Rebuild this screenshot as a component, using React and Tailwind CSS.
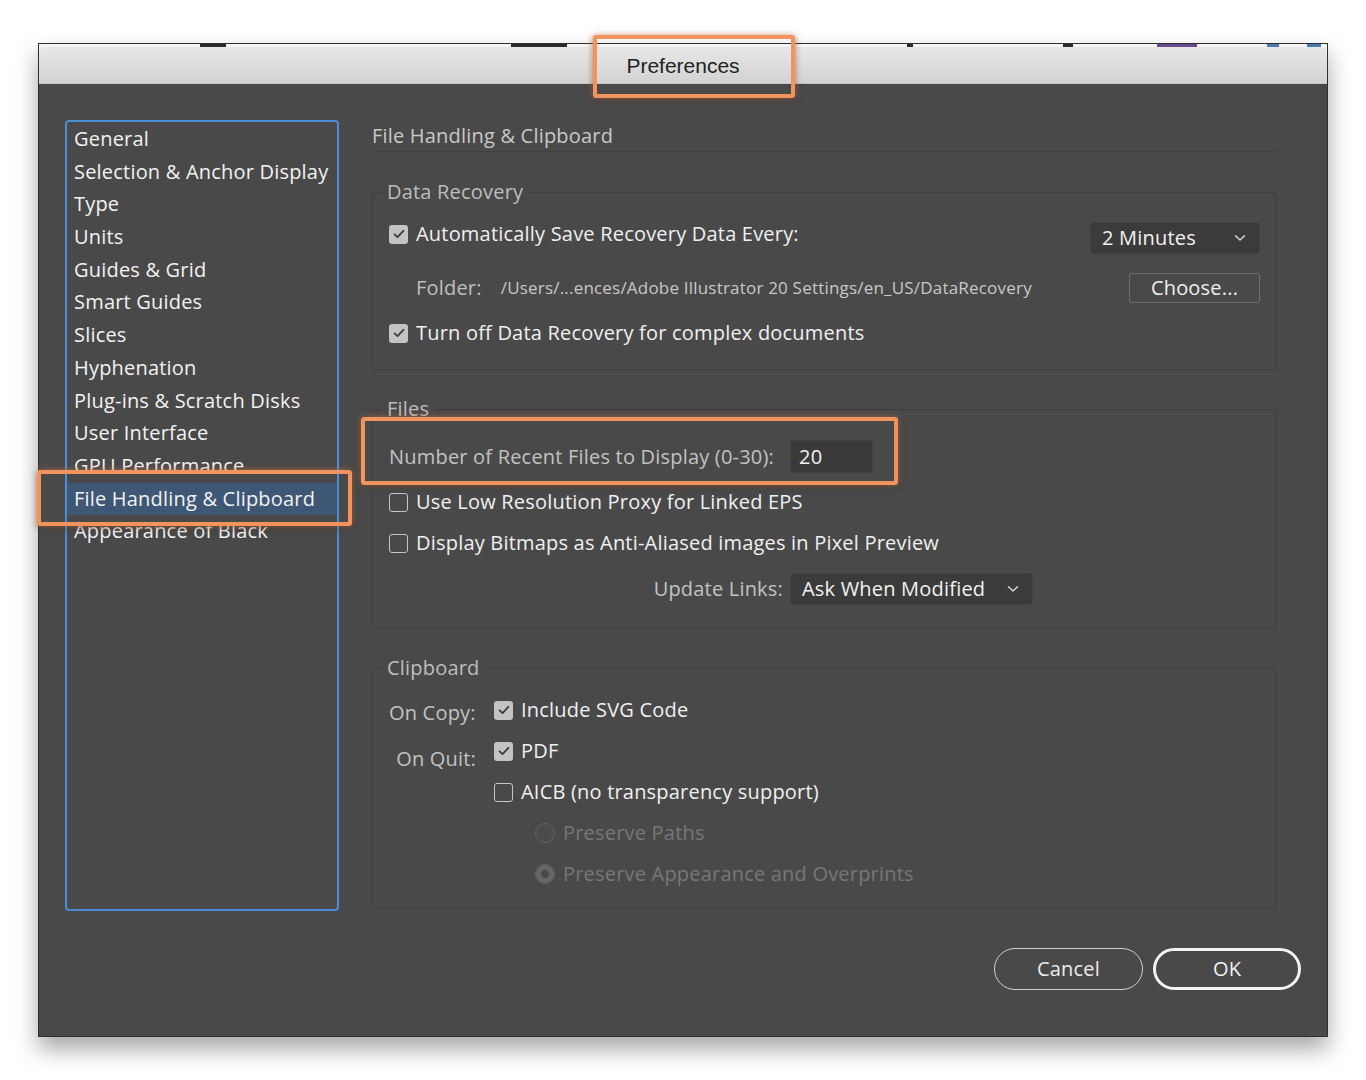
import React from "react";

const items = [
  "General",
  "Selection & Anchor Display",
  "Type",
  "Units",
  "Guides & Grid",
  "Smart Guides",
  "Slices",
  "Hyphenation",
  "Plug-ins & Scratch Disks",
  "User Interface",
  "GPU Performance",
  "File Handling & Clipboard",
  "Appearance of Black",
];

function Check({ checked }) {
  if (checked) {
    return (
      <span className="flex h-[19px] w-[19px] shrink-0 items-center justify-center rounded-[3px] bg-[#c3c3c3]">
        <svg width="12" height="10" viewBox="0 0 12 10">
          <path d="M1.6 5.3 4.5 8.1 10.4 1.8" fill="none" stroke="#3b3b3b" strokeWidth="1.8" strokeLinecap="round" strokeLinejoin="round" />
        </svg>
      </span>
    );
  }
  return <span className="h-[19px] w-[19px] shrink-0 rounded-[3px] border-[1.5px] border-[#c6c6c6]" />;
}

function CheckRow({ checked, children }) {
  return (
    <div className="flex h-[24px] items-center gap-[8px] text-[20px] leading-[24px] text-[#f0f0f0]">
      <Check checked={checked} />
      <span className="whitespace-nowrap">{children}</span>
    </div>
  );
}

function Radio({ on, children }) {
  return (
    <div className="flex h-[24px] items-center gap-[8px] pl-[41px] text-[20px] leading-[24px] text-[#777777]">
      <span className="flex h-[20px] w-[20px] shrink-0 items-center justify-center rounded-full border-[1.5px] border-[#636363] bg-[#4b4b4b]">
        {on && <span className="h-[18px] w-[18px] rounded-full bg-[#666666] p-[5px]"><span className="block h-[8px] w-[8px] rounded-full bg-[#4a4a4a]" /></span>}
      </span>
      <span className="whitespace-nowrap">{children}</span>
    </div>
  );
}

function Chevron() {
  return (
    <svg width="12" height="8" viewBox="0 0 12 8">
      <path d="M1.5 1.8 6 6 10.5 1.8" fill="none" stroke="#d8d8d8" strokeWidth="1.4" strokeLinecap="round" strokeLinejoin="round" />
    </svg>
  );
}

function Select({ width, children }) {
  return (
    <div
      className={`flex h-[32px] items-center justify-between rounded-[4px] border border-[#414141] bg-[#3b3b3b] pl-[11px] pr-[13px] text-[20px] text-[#f2f2f2] ${width}`}
    >
      <span className="whitespace-nowrap">{children}</span>
      <Chevron />
    </div>
  );
}

function Group({ title, className, children }) {
  return (
    <fieldset className={`rounded-[4px] border border-[#3e3e3e] px-[16px] pt-0 ${className}`}>
      <legend className="ml-[-8px] px-[6px] text-[20px] leading-[24px] text-[#bdbdbd]">{title}</legend>
      {children}
    </fieldset>
  );
}

function Highlight({ className }) {
  return (
    <div
      className={`pointer-events-none absolute rounded-[3px] border-[4px] border-[#f0935c] shadow-[0_0_6px_rgba(240,140,80,0.55),0_2px_6px_rgba(0,0,0,0.35)] ${className}`}
    />
  );
}

export default function App() {
  return (
    <div className="relative h-[1080px] w-[1366px] overflow-hidden bg-white pl-[38px] pt-[43px] font-['Open_Sans',sans-serif] font-medium tracking-[0.2px]">
      <div className="flex w-[1290px] flex-col border border-[#2f2f2f] bg-[#f4f4f4] shadow-[0_12px_22px_rgba(0,0,0,0.35)]">
        <div className="flex h-[3px]">
          <span className="ml-[161px] w-[26px] bg-[#2a2a2a]" />
          <span className="ml-[285px] w-[56px] bg-[#2a2a2a]" />
          <span className="ml-[340px] w-[6px] bg-[#2a2a2a]" />
          <span className="ml-[150px] w-[10px] bg-[#2a2a2a]" />
          <span className="ml-[84px] w-[40px] bg-[#6b4a8f]" />
          <span className="ml-[70px] w-[12px] bg-[#4a7ab0]" />
          <span className="ml-[28px] w-[14px] bg-[#4a7ab0]" />
        </div>
        <div className="flex h-[37px] items-center justify-center rounded-t-[6px] border-b border-[#c4c4c4] bg-gradient-to-b from-[#e9e8e9] to-[#d3d2d3] pt-[2px] font-['Liberation_Sans',sans-serif] text-[21px] font-normal tracking-normal text-[#222222]">
          Preferences
        </div>

        <div className="flex flex-col bg-[#494949] pb-[46px] pt-[36px]">
          <div className="flex gap-[33px] pl-[26px]">
            {/* category list */}
            <div className="h-[791px] w-[274px] shrink-0 rounded-[4px] border-2 border-[#4b8dd6] pt-[1px]">
              {items.map((it) => (
                <div
                  key={it}
                  className={`h-[32.7px] whitespace-nowrap px-[7px] text-[20px] leading-[32.7px] text-[#f2f2f2] ${
                    it === "File Handling & Clipboard" ? "bg-[#3e5774]" : ""
                  }`}
                >
                  {it}
                </div>
              ))}
            </div>

            {/* panel */}
            <div className="flex w-[905px] flex-col">
              <div className="border-b border-[#3f3f3f] pb-[3px] pt-[4px] text-[20px] leading-[24px] text-[#c8c8c8]">
                File Handling &amp; Clipboard
              </div>

              <Group title="Data Recovery" className="mt-[28px] pb-[24px]">
                <div className="mt-[18px] flex h-[32px] items-start justify-between">
                  <CheckRow checked>Automatically Save Recovery Data Every:</CheckRow>
                  <Select width="w-[170px]">2 Minutes</Select>
                </div>
                <div className="mt-[19px] flex h-[30px] items-center justify-between">
                  <div className="flex items-center gap-[19px] pl-[27px] whitespace-nowrap">
                    <span className="text-[20px] text-[#bfbfbf]">Folder:</span>
                    <span className="text-[17px] text-[#c8c8c8]">/Users/...ences/Adobe Illustrator 20 Settings/en_US/DataRecovery</span>
                  </div>
                  <div className="flex h-[30px] w-[131px] items-center justify-center rounded-[3px] border border-[#6e6e6e] text-[20px] text-[#f0f0f0]">
                    Choose...
                  </div>
                </div>
                <div className="mt-[18px]">
                  <CheckRow checked>Turn off Data Recovery for complex documents</CheckRow>
                </div>
              </Group>

              <Group title="Files" className="mt-[27px] pb-[23px]">
                <div className="mt-[19px] flex h-[33px] items-center gap-[7px]">
                  <span className="w-[394px] whitespace-nowrap text-[20px] text-[#c2c2c2]">
                    Number of Recent Files to Display (0-30):
                  </span>
                  <div className="flex h-[33px] w-[83px] items-center rounded-[3px] border border-[#414141] bg-[#3a3a3a] pl-[8px] text-[20px] text-[#f2f2f2]">
                    20
                  </div>
                </div>
                <div className="mt-[17px]">
                  <CheckRow>Use Low Resolution Proxy for Linked EPS</CheckRow>
                </div>
                <div className="mt-[17px]">
                  <CheckRow>Display Bitmaps as Anti-Aliased images in Pixel Preview</CheckRow>
                </div>
                <div className="mt-[18px] flex h-[32px] items-center gap-[7px]">
                  <span className="w-[394px] whitespace-nowrap text-right text-[20px] text-[#c2c2c2]">Update Links:</span>
                  <Select width="w-[243px]">Ask When Modified</Select>
                </div>
              </Group>

              <Group title="Clipboard" className="mt-[27px] pb-[22px]">
                <div className="mt-[18px] grid grid-cols-[87px_1fr] gap-x-[18px] gap-y-[17px] text-[20px] leading-[24px]">
                  <span className="relative top-[3px] whitespace-nowrap text-[#c2c2c2]">On Copy:</span>
                  <CheckRow checked>Include SVG Code</CheckRow>
                  <span className="relative top-[8px] whitespace-nowrap text-right text-[#c2c2c2]">On Quit:</span>
                  <CheckRow checked>PDF</CheckRow>
                  <span />
                  <CheckRow>AICB (no transparency support)</CheckRow>
                  <span />
                  <Radio>Preserve Paths</Radio>
                  <span />
                  <Radio on>Preserve Appearance and Overprints</Radio>
                </div>
              </Group>
            </div>
          </div>

          <div className="mt-[37px] flex justify-end gap-[10px] pr-[26px]">
            <div className="flex h-[42px] w-[149px] items-center justify-center rounded-full border-[1.5px] border-[#cfcfcf] text-[20px] text-[#ececec]">
              Cancel
            </div>
            <div className="flex h-[42px] w-[148px] items-center justify-center rounded-full border-[3px] border-[#f2f2f2] text-[20px] text-[#f2f2f2]">
              OK
            </div>
          </div>
        </div>
      </div>

      <Highlight className="left-[593px] top-[35px] h-[63px] w-[202px]" />
      <Highlight className="left-[37px] top-[470px] h-[56px] w-[315px]" />
      <Highlight className="left-[361px] top-[417px] h-[68px] w-[537px]" />
    </div>
  );
}
